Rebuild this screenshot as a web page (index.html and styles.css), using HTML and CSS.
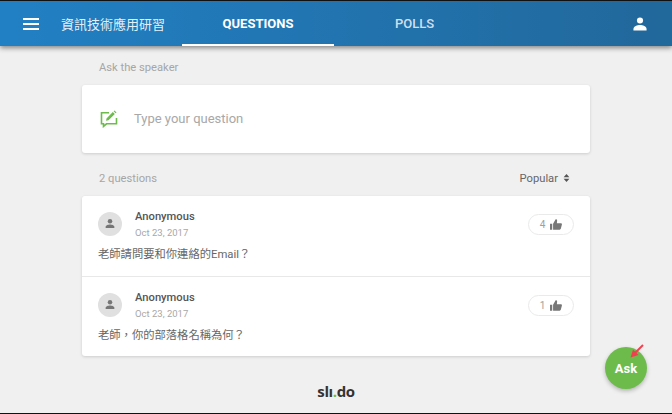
FILE: index.html
```html
<!DOCTYPE html>
<html lang="zh-Hant">
<head>
    <meta charset="UTF-8">
    <title>資訊技術應用研習</title>
    <link rel="stylesheet" href="styles.css">
</head>
<body>
    <div class="frame">
        <header class="topbar">
            <button class="menu-btn" aria-label="Menu"><span></span><span></span><span></span></button>
            <div class="event-name">資訊技術應用研習</div>
            <nav class="tabs">
                <a class="tab active">QUESTIONS</a>
                <a class="tab">POLLS</a>
            </nav>
            <svg class="user-icon" viewBox="0 0 16 16"><circle cx="8" cy="4" r="3.5"/><path d="M.5 15.500v-1.700C.5 10.800 5 9.200 8 9.200s7.500 1.600 7.500 4.600v1.700z"/></svg>
        </header>

        <main class="content">
            <div class="label ask-label">Ask the speaker</div>
            <div class="card ask-box">
                <svg class="ask-icon" viewBox="0 0 18 18"><path d="M9 2.800H1.500v11h2v2.600l3-2.600h10V8" fill="none" stroke="#6cbb4b" stroke-width="1.600"/><path d="M6 10.800l.5-2.400 6.300-6.300 2 2-6.300 6.200z M13.600 1.300l.9-.9 2 2-.9.9z" fill="#6cbb4b"/></svg>
                <span class="ask-text">Type your question</span>
            </div>

            <div class="list-head">
                <span class="label">2 questions</span>
                <span class="sort">Popular
                    <svg class="sort-icon" viewBox="0 0 8 10"><path d="M4 0l3.600 4H.4zM4 10L.4 6h7.200z"/></svg>
                </span>
            </div>

            <div class="card questions">
                <div class="question">
                    <div class="q-head">
                        <div class="avatar"><svg viewBox="0 0 16 16"><circle cx="8" cy="4.400" r="3"/><path d="M2.200 13.400v-1.500c0-2.200 3.800-3.200 5.800-3.200s5.800 1 5.800 3.200v1.500z"/></svg></div>
                        <div class="q-meta">
                            <div class="q-author">Anonymous</div>
                            <div class="q-date">Oct 23, 2017</div>
                        </div>
                        <div class="likes">4 <svg class="thumb" viewBox="0 0 14 12"><path d="M0 5h2.600v7H0zM3.600 5l3-5c1.200 0 1.900.8 1.700 2L8 4.400h4.600c.9 0 1.500.8 1.300 1.600l-1.300 5c-.2.600-.7 1-1.300 1H3.600z"/></svg></div>
                    </div>
                    <div class="q-text">老師請問要和你連絡的Email？</div>
                </div>
                <div class="question">
                    <div class="q-head">
                        <div class="avatar"><svg viewBox="0 0 16 16"><circle cx="8" cy="4.400" r="3"/><path d="M2.200 13.400v-1.500c0-2.200 3.800-3.200 5.800-3.200s5.800 1 5.800 3.200v1.500z"/></svg></div>
                        <div class="q-meta">
                            <div class="q-author">Anonymous</div>
                            <div class="q-date">Oct 23, 2017</div>
                        </div>
                        <div class="likes">1 <svg class="thumb" viewBox="0 0 14 12"><path d="M0 5h2.600v7H0zM3.600 5l3-5c1.200 0 1.900.8 1.700 2L8 4.400h4.600c.9 0 1.500.8 1.300 1.600l-1.300 5c-.2.600-.7 1-1.300 1H3.600z"/></svg></div>
                    </div>
                    <div class="q-text">老師，你的部落格名稱為何？</div>
                </div>
            </div>

            <div class="brand">sl<span>ı</span><span class="brand-dot">.</span>do</div>
        </main>

        <button class="ask-fab">Ask
            <svg class="arrow" viewBox="0 0 14 14"><path d="M13 1L5 9" stroke="#f0404f" stroke-width="2" fill="none"/><path d="M.5 13.500L3 5.500l5.500 5.500z" fill="#f0404f"/></svg>
        </button>
    </div>
</body>
</html>
```

FILE: styles.css
```css
* {
    margin: 0;
    padding: 0;
    box-sizing: border-box;
    font-family: Roboto, 'Noto Sans CJK TC', sans-serif;
}

body {
    width: 672px;
    height: 414px;
    overflow: hidden;
    background-color: #f0f0f0;
}

.frame {
    width: 672px;
    height: 414px;
    position: relative;
    overflow: hidden;
    border-top: 1px solid #111;
    border-bottom: 1px solid #111;
}

.topbar {
    height: 45px;
    display: flex;
    align-items: center;
    padding: 0 25px 0 23px;
    color: white;
    background: linear-gradient(90deg, #2180c4, #21689b);
    box-shadow: 0 2px 5px rgba(0, 0, 0, 0.45);
}

.menu-btn {
    width: 16px;
    display: flex;
    flex-direction: column;
    gap: 3px;
    background: none;
    border: none;
    margin-right: 22px;
}

.menu-btn span {
    display: block;
    height: 2px;
    background-color: white;
}

.event-name {
    width: 121px;
    font-size: 13px;
    white-space: nowrap;
    color: rgba(255, 255, 255, 0.9);
}

.tabs {
    display: flex;
    height: 100%;
}

.tab {
    width: 152px;
    padding-top: 1px;
    display: flex;
    justify-content: center;
    align-items: center;
    font-size: 13px;
    font-weight: 500;
    color: rgba(255, 255, 255, 0.8);
    border-bottom: 2px solid transparent;
}

.tab + .tab {
    width: 161px;
}

.tab.active {
    color: white;
    font-weight: 700;
    border-bottom-color: white;
}

.user-icon {
    width: 14px;
    height: 14px;
    margin-left: auto;
    fill: white;
}

.content {
    width: 508px;
    margin-left: 82px;
}

.label {
    color: #a6a6a6;
    font-size: 11.2px;
    padding-left: 17px;
}

.ask-label {
    padding-top: 15px;
    padding-bottom: 11px;
    line-height: 13px;
}

.card {
    background: white;
    border-radius: 3px;
    box-shadow: 0 1px 3px rgba(0, 0, 0, 0.15);
}

.ask-box {
    height: 68px;
    display: flex;
    align-items: center;
    padding-left: 18px;
}

.ask-icon {
    width: 18px;
    height: 18px;
    margin-right: 16px;
}

.ask-text {
    color: #a8a8a8;
    font-size: 13px;
    padding-bottom: 2px;
}

.list-head {
    height: 43px;
    padding-top: 7px;
    padding-right: 20px;
    display: flex;
    justify-content: space-between;
    align-items: center;
}

.sort {
    display: flex;
    align-items: center;
    gap: 5px;
    color: #666;
    font-size: 11.2px;
}

.sort-icon {
    width: 7px;
    height: 8px;
    fill: #555;
}

.question {
    height: 81px;
    padding: 16px 16px 0;
    border-bottom: 1px solid #e8e8e8;
}

.question:last-child {
    height: 79px;
    border-bottom: none;
}

.q-head {
    height: 29px;
    display: flex;
}

.avatar {
    width: 24px;
    height: 24px;
    border-radius: 50%;
    background-color: #e0e0e0;
    display: flex;
    justify-content: center;
    align-items: center;
    margin-right: 13px;
}

.avatar svg {
    width: 12px;
    height: 12px;
    fill: #757575;
}

.q-meta {
    margin-top: -2px;
}

.q-author {
    color: #555;
    font-size: 11.2px;
    font-weight: 500;
    line-height: 13px;
}

.q-date {
    color: #a8a8a8;
    font-size: 9.5px;
    line-height: 12px;
    margin-top: 4px;
}

.likes {
    margin-left: auto;
    margin-top: 2px;
    width: 46px;
    height: 21px;
    border: 1px solid #eaeaea;
    border-radius: 11px;
    display: flex;
    justify-content: center;
    align-items: center;
    gap: 5px;
    color: #a0a0a0;
    font-size: 10px;
}

.thumb {
    width: 12px;
    height: 11px;
    fill: #777;
}

.q-text {
    color: #666;
    font-size: 11.3px;
    line-height: 14px;
    margin-top: 7px;
}

.brand {
    margin-top: 25px;
    text-align: center;
    font-family: 'Open Sans', sans-serif;
    font-size: 15px;
    font-weight: 700;
    color: #333;
    letter-spacing: -0.4px;
}

.brand span {
    font-family: inherit;
}

.brand-dot {
    color: #6cbb4b;
}

.ask-fab {
    position: absolute;
    left: 605px;
    top: 346px;
    width: 42px;
    height: 42px;
    border: none;
    border-radius: 50%;
    background-color: #6cbb4b;
    color: white;
    font-size: 13px;
    font-weight: 700;
    box-shadow: 0 2px 4px rgba(0, 0, 0, 0.25);
}

.arrow {
    position: absolute;
    left: 25px;
    top: -3px;
    width: 14px;
    height: 14px;
}
```
